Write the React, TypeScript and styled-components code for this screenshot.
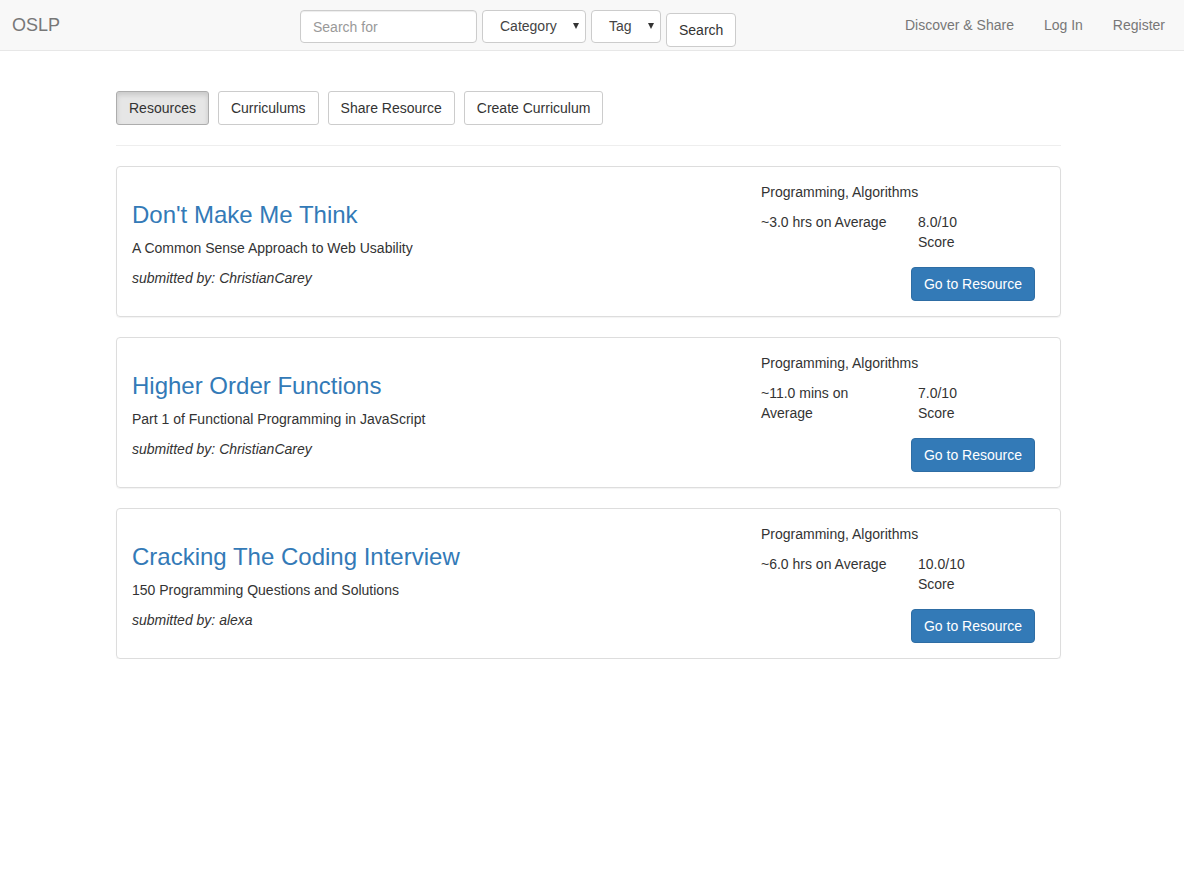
import React from "react";
import styled, { createGlobalStyle } from "styled-components";

const Global = createGlobalStyle`
  html, body { margin: 0; padding: 0; background: #fff; }
  body {
    font-family: "Liberation Sans", Arial, Helvetica, sans-serif;
    font-size: 14px;
    line-height: 20px;
    color: #333;
  }
  * { box-sizing: border-box; }
`;

const Navbar = styled.header`
  height: 51px;
  background: #f8f8f8;
  border-bottom: 1px solid #e7e7e7;
  display: grid;
  grid-template-columns: 300px auto 1fr auto;
  align-items: start;
`;

const Brand = styled.a`
  font-size: 18px;
  line-height: 20px;
  color: #777;
  padding: 15px 12px;
  text-decoration: none;
`;

const SearchForm = styled.form`
  display: flex;
  align-items: flex-start;
  gap: 5px;
  padding-top: 10px;
`;

const Input = styled.input`
  width: 177px;
  height: 33px;
  border: 1px solid #ccc;
  border-radius: 4px;
  padding: 6px 12px;
  font-family: inherit;
  font-size: 14px;
  color: #555;
  background: #fff;
  box-shadow: inset 0 1px 1px rgba(0, 0, 0, 0.075);
  &::placeholder { color: #999; }
`;

const Select = styled.div<{ $w: number }>`
  width: ${(p) => p.$w}px;
  height: 33px;
  border: 1px solid #ccc;
  border-radius: 4px;
  background: #fff;
  display: flex;
  align-items: center;
  padding: 0 6px 1px 17px;
  color: #444;
  font-size: 14px;
`;

const Caret = styled.span`
  margin-left: auto;
  width: 0;
  height: 0;
  border-left: 3px solid transparent;
  border-right: 3px solid transparent;
  border-top: 6px solid #333;
`;

const SearchButton = styled.button`
  height: 34px;
  margin-top: 3px;
  padding: 6px 12px;
  border: 1px solid #ccc;
  border-radius: 4px;
  background: #fff;
  font-family: inherit;
  font-size: 14px;
  color: #333;
`;

const Spacer = styled.div``;

const NavLinks = styled.nav`
  display: flex;
  padding-right: 4px;
`;

const NavLink = styled.a`
  padding: 15px 15px;
  color: #777;
  text-decoration: none;
  font-size: 14px;
  line-height: 20px;
`;

const Main = styled.main`
  width: 945px;
  margin-left: 116px;
  padding-top: 40px;
`;

const Tabs = styled.div`
  display: flex;
  gap: 9px;
`;

const TabButton = styled.button<{ $active?: boolean }>`
  padding: 6px 12px;
  height: 34px;
  font-family: inherit;
  font-size: 14px;
  line-height: 20px;
  color: #333;
  border-radius: 3px;
  border: 1px solid ${(p) => (p.$active ? "#adadad" : "#ccc")};
  background: ${(p) => (p.$active ? "#e6e6e6" : "#fff")};
  box-shadow: ${(p) => (p.$active ? "inset 0 3px 5px rgba(0,0,0,.125)" : "none")};
`;

const Rule = styled.hr`
  border: 0;
  border-top: 1px solid #eee;
  margin: 20px 0 20px;
`;

const CardList = styled.div`
  display: flex;
  flex-direction: column;
  gap: 20px;
`;

const Card = styled.article`
  border: 1px solid #ddd;
  border-radius: 4px;
  box-shadow: 0 1px 1px rgba(0, 0, 0, 0.05);
  padding: 15px;
  display: flex;
  height: 151px;
`;

const Left = styled.div`
  flex: 1;
`;

const Title = styled.h3`
  margin: 20px 0 10px;
  font-size: 24px;
  font-weight: 500;
  line-height: 26.4px;
  color: #337ab7;
`;

const Para = styled.p`
  margin: 0 0 10px;
`;

const Submitted = styled.p`
  margin: 0;
  font-style: italic;
`;

const Right = styled.div`
  width: 274px;
  margin-right: 10px;
  display: flex;
  flex-direction: column;
`;

const Stats = styled.div`
  display: grid;
  grid-template-columns: 157px 60px;
  margin-bottom: 15px;
`;

const StatCell = styled.div<{ $pad?: boolean }>`
  padding-right: ${(p) => (p.$pad ? "15px" : "0")};
`;

const GoButton = styled.button`
  align-self: flex-end;
  height: 34px;
  padding: 6px 12px;
  font-family: inherit;
  font-size: 14px;
  line-height: 20px;
  color: #fff;
  background: #337ab7;
  border: 1px solid #2e6da4;
  border-radius: 4px;
`;

const resources = [
  {
    title: "Don't Make Me Think",
    sub: "A Common Sense Approach to Web Usability",
    by: "ChristianCarey",
    time: "~3.0 hrs on Average",
    score: "8.0/10",
  },
  {
    title: "Higher Order Functions",
    sub: "Part 1 of Functional Programming in JavaScript",
    by: "ChristianCarey",
    time: "~11.0 mins on Average",
    score: "7.0/10",
  },
  {
    title: "Cracking The Coding Interview",
    sub: "150 Programming Questions and Solutions",
    by: "alexa",
    time: "~6.0 hrs on Average",
    score: "10.0/10",
  },
];

export default function App() {
  return (
    <>
      <Global />
      <Navbar>
        <Brand href="#">OSLP</Brand>
        <SearchForm onSubmit={(e) => e.preventDefault()}>
          <Input placeholder="Search for" />
          <Select $w={104}>
            Category
            <Caret />
          </Select>
          <Select $w={70}>
            Tag
            <Caret />
          </Select>
          <SearchButton type="submit">Search</SearchButton>
        </SearchForm>
        <Spacer />
        <NavLinks>
          <NavLink href="#">Discover &amp; Share</NavLink>
          <NavLink href="#">Log In</NavLink>
          <NavLink href="#">Register</NavLink>
        </NavLinks>
      </Navbar>
      <Main>
        <Tabs>
          <TabButton $active>Resources</TabButton>
          <TabButton>Curriculums</TabButton>
          <TabButton>Share Resource</TabButton>
          <TabButton>Create Curriculum</TabButton>
        </Tabs>
        <Rule />
        <CardList>
          {resources.map((r) => (
            <Card key={r.title}>
              <Left>
                <Title>{r.title}</Title>
                <Para>{r.sub}</Para>
                <Submitted>submitted by: {r.by}</Submitted>
              </Left>
              <Right>
                <Para>Programming, Algorithms</Para>
                <Stats>
                  <StatCell $pad>{r.time}</StatCell>
                  <StatCell>{r.score} Score</StatCell>
                </Stats>
                <GoButton>Go to Resource</GoButton>
              </Right>
            </Card>
          ))}
        </CardList>
      </Main>
    </>
  );
}
